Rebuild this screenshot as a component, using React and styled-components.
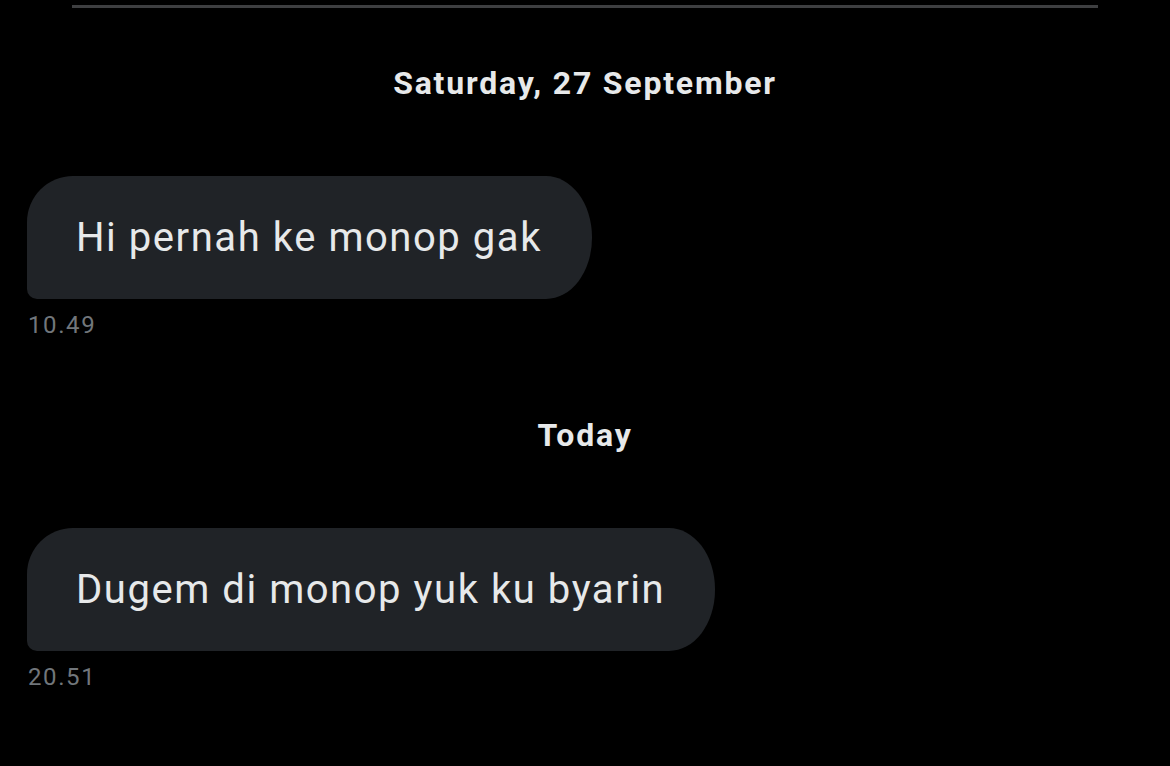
import React from 'react';
import styled, { createGlobalStyle } from 'styled-components';

const GlobalStyle = createGlobalStyle`
  html, body {
    margin: 0;
    padding: 0;
    background: #000;
  }
  body {
    font-family: Roboto, "Liberation Sans", sans-serif;
    -webkit-font-smoothing: antialiased;
  }
`;

const messages = [
  { day: 'Saturday, 27 September', text: 'Hi pernah ke monop gak', time: '10.49' },
  { day: 'Today', text: 'Dugem di monop yuk ku byarin', time: '20.51' },
];

export default function App() {
  return (
    <Screen>
      <GlobalStyle />
      <Divider />
      {messages.map((m, i) => (
        <Group key={m.time} first={i === 0}>
          <DayLabel>{m.day}</DayLabel>
          <Bubble>{m.text}</Bubble>
          <Time>{m.time}</Time>
        </Group>
      ))}
    </Screen>
  );
}

const Screen = styled.div`
  width: 1170px;
  height: 766px;
  background: #000;
  overflow: hidden;
  padding-top: 5px;
  box-sizing: border-box;
`;

const Divider = styled.div`
  height: 3px;
  margin: 0 72px;
  background-color: #3e3f41;
`;

const Group = styled.div`
  display: flex;
  flex-direction: column;
  align-items: flex-start;
  padding: 0 0 0 27px;
  margin-top: ${(props) => (props.first ? '55px' : '76px')};
`;

const DayLabel = styled.div`
  align-self: center;
  margin-left: -27px;
  font-size: 32px;
  line-height: 40px;
  font-weight: 700;
  letter-spacing: 1.8px;
  color: #e7e9ea;
`;

const Bubble = styled.div`
  display: flex;
  align-items: center;
  height: 123px;
  box-sizing: border-box;
  margin-top: 73px;
  padding: 0 50px 0 49px;
  background-color: #202327;
  border-radius: 46px 46px 46px 10px / 46px 61px 61px 10px;
  font-size: 40px;
  letter-spacing: 1.55px;
  color: #e7e9ea;
`;

const Time = styled.div`
  margin-top: 12px;
  padding-left: 1px;
  font-size: 24px;
  line-height: 28px;
  letter-spacing: 1.6px;
  color: #71767b;
`;
